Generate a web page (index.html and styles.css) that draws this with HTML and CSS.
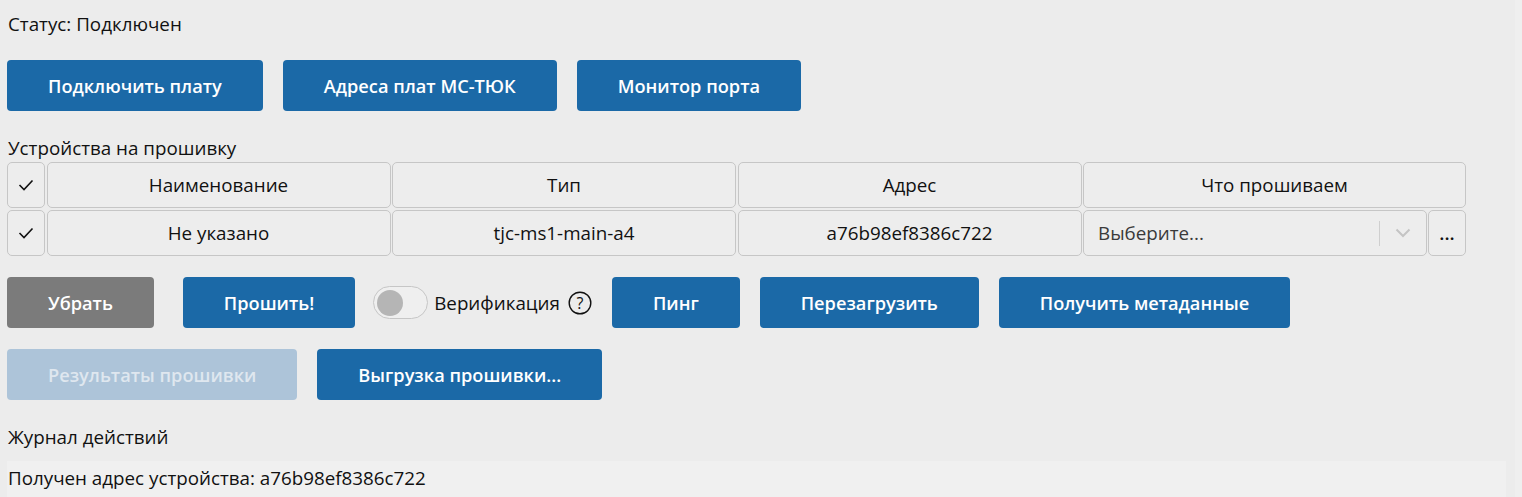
FILE: index.html
```html
<!DOCTYPE html>
<html lang="ru">
<head>
<meta charset="utf-8">
<title>Прошивка</title>
<link rel="stylesheet" href="styles.css">
</head>
<body>
<div class="page">
  <div class="status">Статус: Подключен</div>
  <div class="btn-row row1">
    <button class="btn">Подключить плату</button>
    <button class="btn">Адреса плат МС-ТЮК</button>
    <button class="btn">Монитор порта</button>
  </div>
  <div class="label devices-label">Устройства на прошивку</div>
  <div class="table">
    <div class="cell check"><svg width="16" height="12" viewBox="0 0 16 12"><polyline points="1.5,6 6,10.5 14.5,1.5" fill="none" stroke="#111" stroke-width="1.6"/></svg></div>
    <div class="cell">Наименование</div>
    <div class="cell">Тип</div>
    <div class="cell">Адрес</div>
    <div class="cell">Что прошиваем</div>
    <div class="cell check"><svg width="16" height="12" viewBox="0 0 16 12"><polyline points="1.5,6 6,10.5 14.5,1.5" fill="none" stroke="#111" stroke-width="1.6"/></svg></div>
    <div class="cell">Не указано</div>
    <div class="cell">tjc-ms1-main-a4</div>
    <div class="cell">a76b98ef8386c722</div>
    <div class="select-wrap">
      <div class="cell select">
        <span class="placeholder">Выберите...</span>
        <span class="sep"></span>
        <svg class="chev" width="16" height="10" viewBox="0 0 16 10"><polyline points="1.5,1.5 8,8 14.5,1.5" fill="none" stroke="#c4c4c4" stroke-width="2"/></svg>
      </div>
      <div class="cell dots">...</div>
    </div>
  </div>
  <div class="btn-row row3">
    <button class="btn gray">Убрать</button>
    <button class="btn flash">Прошить!</button>
    <div class="toggle-group">
      <span class="toggle"><span class="knob"></span></span>
      <span class="toggle-label">Верификация</span>
      <svg class="help" width="24" height="24" viewBox="0 0 24 24"><circle cx="12" cy="12" r="10.8" fill="none" stroke="#111" stroke-width="1.4"/><text x="12" y="17.6" text-anchor="middle" font-family="Open Sans, sans-serif" font-size="16" fill="#111">?</text></svg>
    </div>
    <button class="btn">Пинг</button>
    <button class="btn">Перезагрузить</button>
    <button class="btn">Получить метаданные</button>
  </div>
  <div class="btn-row row4">
    <button class="btn disabled">Результаты прошивки</button>
    <button class="btn">Выгрузка прошивки...</button>
  </div>
  <div class="label journal-label">Журнал действий</div>
  <div class="log">Получен адрес устройства: a76b98ef8386c722</div>
</div>
</body>
</html>
```
FILE: styles.css
```css
html, body {
  margin: 0;
  padding: 0;
  background: #efefef;
}
body {
  font-family: "Open Sans", "Noto Sans", sans-serif;
  font-size: 18.8px;
  color: #111;
  overflow: hidden;
}
.page {
  width: 1515px;
  height: 497px;
  box-sizing: border-box;
  background: #ececec;
  padding: 0 7px;
  display: flex;
  flex-direction: column;
}
.status {
  line-height: 22px;
  margin-top: 13px;
  padding-left: 1px;
}
.btn-row {
  display: flex;
  align-items: center;
  gap: 20px;
}
.row1 { margin-top: 25px; }
.row3 { margin-top: 21px; }
.row4 { margin-top: 21px; }
.btn {
  height: 51px;
  padding: 0 41px;
  border: none;
  border-radius: 4px;
  background: #1b69a7;
  color: #fff;
  font-family: inherit;
  font-size: 18.2px;
  font-weight: 600;
  white-space: nowrap;
}
.btn.gray { background: #7b7b7b; }
.btn.flash { margin-left: 9px; }
.btn.disabled { background: #adc4d9; color: #dfe7ef; }
.label {
  line-height: 22px;
  padding-left: 1px;
}
.devices-label { margin-top: 26px; }
.table {
  margin-top: 3px;
  display: grid;
  grid-template-columns: 38px 344px 344px 344px 383px;
  grid-auto-rows: 46px;
  gap: 2px 1.5px;
}
.cell {
  box-sizing: border-box;
  border: 1px solid #c6c6c6;
  border-radius: 5px;
  background: #ededed;
  display: flex;
  align-items: center;
  justify-content: center;
  white-space: nowrap;
}
.select-wrap {
  display: flex;
  gap: 1.5px;
}
.select {
  flex: 1;
  justify-content: flex-start;
  padding-left: 14px;
}
.placeholder { color: #3a3a3a; flex: 1; }
.sep {
  width: 1px;
  height: 25px;
  background: #cfcfcf;
  margin-right: 15px;
}
.chev { margin-right: 15px; }
.dots {
  width: 38px;
  font-weight: 600;
}
.toggle-group {
  display: flex;
  align-items: center;
  margin-left: -2px;
}
.toggle {
  box-sizing: border-box;
  width: 55px;
  height: 33px;
  border: 1px solid #c6c6c6;
  border-radius: 17px;
  background: #efefef;
  display: flex;
  align-items: center;
  padding-left: 3px;
}
.knob {
  width: 26px;
  height: 26px;
  border-radius: 50%;
  background: #b5b5b5;
}
.toggle-label { margin-left: 6px; }
.help { margin-left: 8px; }
.journal-label { margin-top: 26px; }
.log {
  margin-top: 13px;
  width: 1498px;
  flex: 1;
  background: #f0f0f0;
  padding-left: 1px;
  line-height: 22px;
  padding-top: 6px;
}
```
